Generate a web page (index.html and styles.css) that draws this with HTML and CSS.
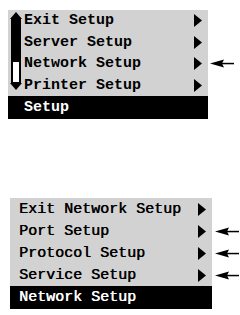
FILE: index.html
```html
<!DOCTYPE html>
<html>
<head>
<meta charset="utf-8">
<link rel="stylesheet" href="styles.css">
</head>
<body>
<div class="page">
  <div class="panel panel-one">
    <div class="menu">
      <div class="body">
        <div class="scroll">
          <svg class="up" width="12" height="7" viewBox="0 0 12 7"><polygon points="6,0 12,7 0,7" fill="#000"/></svg>
          <div class="track"><div class="thumb"></div></div>
          <svg class="down" width="12" height="7" viewBox="0 0 12 7"><polygon points="0,0 12,0 6,7" fill="#000"/></svg>
        </div>
        <ul class="items">
          <li class="item"><span>Exit Setup</span><svg class="tri" width="8" height="13" viewBox="0 0 8 13"><polygon points="0,0 8,6.5 0,13" fill="#000"/></svg></li>
          <li class="item"><span>Server Setup</span><svg class="tri" width="8" height="13" viewBox="0 0 8 13"><polygon points="0,0 8,6.5 0,13" fill="#000"/></svg></li>
          <li class="item"><span>Network Setup</span><svg class="tri" width="8" height="13" viewBox="0 0 8 13"><polygon points="0,0 8,6.5 0,13" fill="#000"/></svg></li>
          <li class="item"><span>Printer Setup</span><svg class="tri" width="8" height="13" viewBox="0 0 8 13"><polygon points="0,0 8,6.5 0,13" fill="#000"/></svg></li>
        </ul>
      </div>
      <div class="title">Setup</div>
    </div>
    <div class="pointers">
      <div class="pslot"></div>
      <div class="pslot"></div>
      <div class="pslot"><svg width="24" height="9" viewBox="0 0 24 9"><polygon points="0,4.5 14,0.5 12,4.5 14,8.5" fill="#000"/><rect x="11" y="3.8" width="13" height="1.5" fill="#000"/></svg></div>
      <div class="pslot"></div>
    </div>
  </div>

  <div class="panel panel-two">
    <div class="menu">
      <ul class="items">
        <li class="item"><span>Exit Network Setup</span><svg class="tri" width="8" height="13" viewBox="0 0 8 13"><polygon points="0,0 8,6.5 0,13" fill="#000"/></svg></li>
        <li class="item"><span>Port Setup</span><svg class="tri" width="8" height="13" viewBox="0 0 8 13"><polygon points="0,0 8,6.5 0,13" fill="#000"/></svg></li>
        <li class="item"><span>Protocol Setup</span><svg class="tri" width="8" height="13" viewBox="0 0 8 13"><polygon points="0,0 8,6.5 0,13" fill="#000"/></svg></li>
        <li class="item"><span>Service Setup</span><svg class="tri" width="8" height="13" viewBox="0 0 8 13"><polygon points="0,0 8,6.5 0,13" fill="#000"/></svg></li>
      </ul>
      <div class="title">Network Setup</div>
    </div>
    <div class="pointers">
      <div class="pslot"></div>
      <div class="pslot"><svg width="24" height="9" viewBox="0 0 24 9"><polygon points="0,4.5 14,0.5 12,4.5 14,8.5" fill="#000"/><rect x="11" y="3.8" width="13" height="1.5" fill="#000"/></svg></div>
      <div class="pslot"><svg width="24" height="9" viewBox="0 0 24 9"><polygon points="0,4.5 14,0.5 12,4.5 14,8.5" fill="#000"/><rect x="11" y="3.8" width="13" height="1.5" fill="#000"/></svg></div>
      <div class="pslot"><svg width="24" height="9" viewBox="0 0 24 9"><polygon points="0,4.5 14,0.5 12,4.5 14,8.5" fill="#000"/><rect x="11" y="3.8" width="13" height="1.5" fill="#000"/></svg></div>
    </div>
  </div>
</div>
</body>
</html>
```

FILE: styles.css
```css
* { box-sizing: border-box; }
html, body {
  margin: 0;
  padding: 0;
  background: #fff;
}
body {
  width: 240px;
  height: 315px;
  overflow: hidden;
  font-family: "Liberation Mono", "Courier New", monospace;
  font-size: 15px;
  color: #000;
}
.page {
  display: flex;
  flex-direction: column;
  padding-top: 10px;
}
.panel {
  display: flex;
  align-items: flex-start;
}
.panel-one {
  padding-left: 8px;
  font-weight: bold;
}
.panel-two {
  padding-left: 10px;
  margin-top: 79px;
}
.panel-two .item span,
.panel-two .title {
  text-shadow: 0.4px 0 0 currentColor;
}
.menu {
  background: #d2d2d2;
  display: flex;
  flex-direction: column;
}
.panel-one .menu { width: 200px; }
.panel-two .menu { width: 202px; }
.body {
  display: flex;
}
.scroll {
  width: 16px;
  padding: 2px 0 0 2px;
  display: flex;
  flex-direction: column;
  align-items: flex-start;
}
.scroll svg { display: block; }
.track {
  width: 10px;
  height: 64px;
  margin-left: 1px;
  background: #000;
  display: flex;
  flex-direction: column;
  justify-content: flex-end;
  align-items: center;
  padding-bottom: 1px;
}
.thumb {
  width: 6px;
  height: 20px;
  background: #fff;
}
.items {
  list-style: none;
  margin: 0;
  padding: 0;
  flex: 1;
}
.item {
  display: flex;
  align-items: center;
  justify-content: space-between;
  white-space: pre;
}
.panel-one .item {
  height: 21.5px;
  padding-right: 6px;
}
.panel-two .item {
  height: 22px;
  padding-left: 9px;
  padding-right: 6px;
}
.tri { display: block; }
.title {
  background: #000;
  color: #fff;
  height: 23px;
  display: flex;
  align-items: center;
}
.panel-one .title { padding-left: 16px; }
.panel-two .title { padding-left: 9px; }
.pointers {
  display: flex;
  flex-direction: column;
  padding-left: 2px;
}
.panel-one .pslot { height: 21.5px; display: flex; align-items: center; }
.panel-two .pslot { height: 22px; display: flex; align-items: center; padding-left: 1px; }
.pslot svg { display: block; }
```
